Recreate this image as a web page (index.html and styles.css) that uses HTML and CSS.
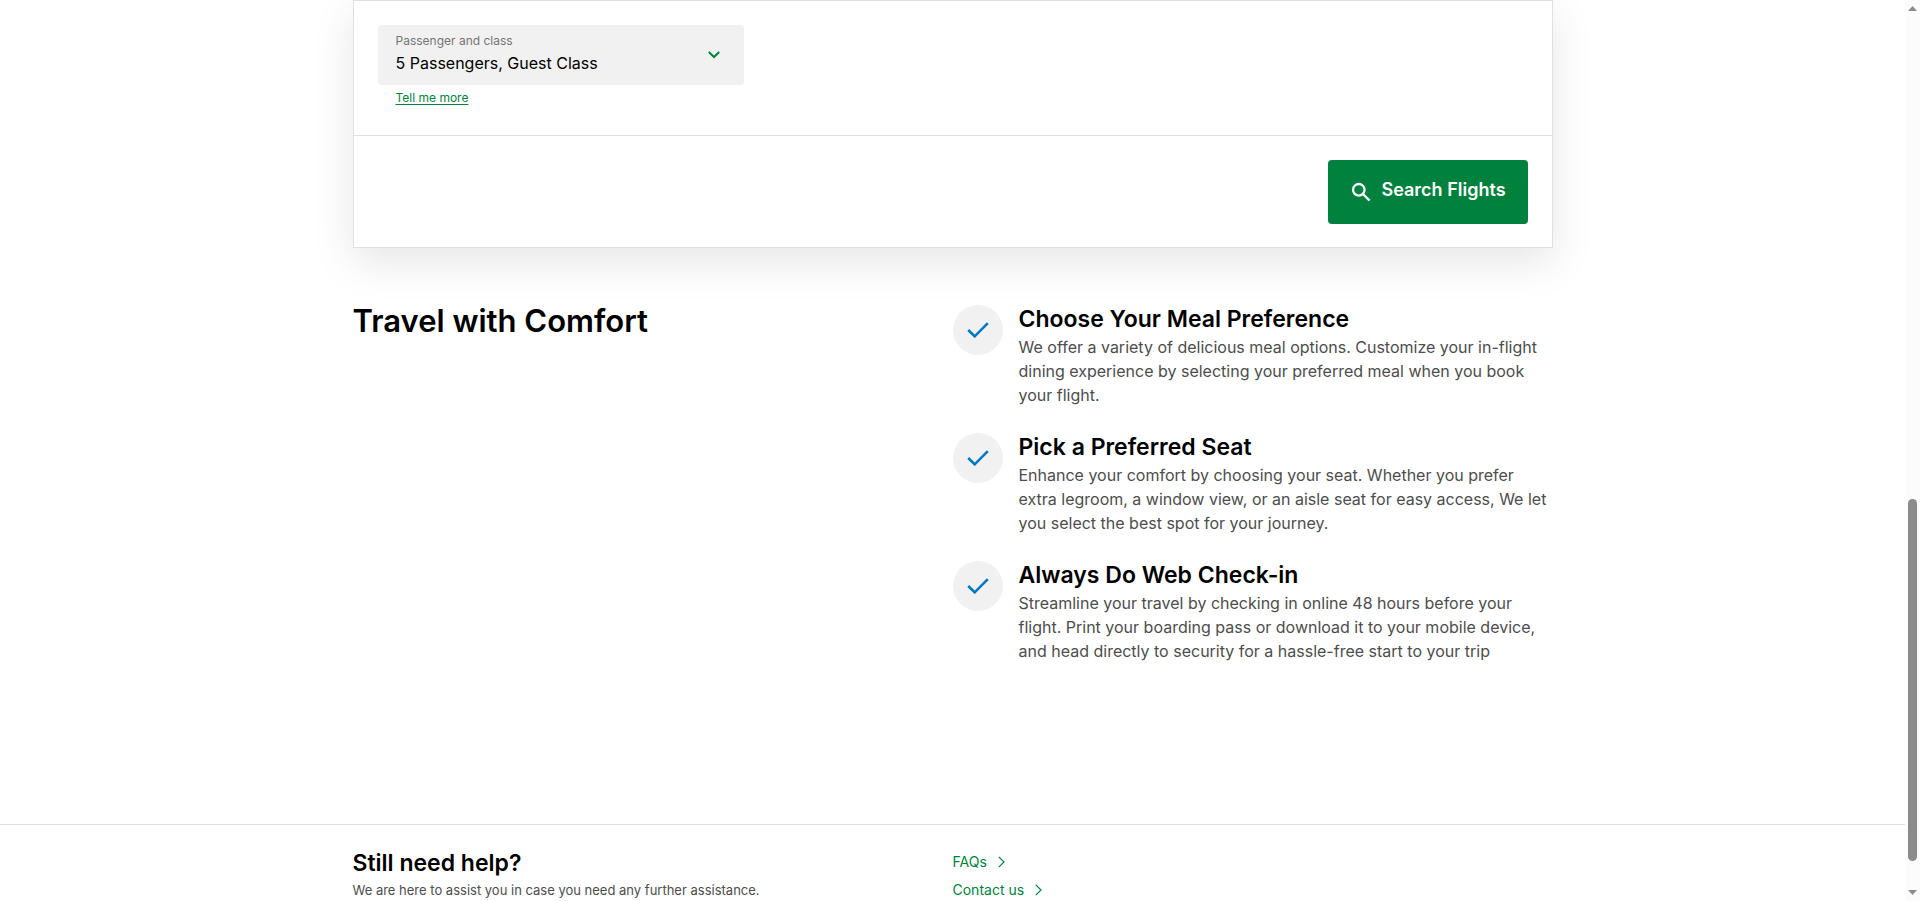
FILE: index.html
```
<!DOCTYPE html>
<html lang="en">
<head>
<meta charset="utf-8">
<meta name="viewport" content="width=device-width, initial-scale=1">
<title>Travel with Comfort</title>
<link rel="stylesheet" href="styles.css">
</head>
<body>
<div class="window">
  <div class="page">
    <main class="container">
      <form class="booking">
        <div class="booking-row">
          <button type="button" class="field" aria-haspopup="dialog">
            <span class="field-text">
              <span class="field-label">Passenger and class</span>
              <span class="field-value">5 Passengers, Guest Class</span>
            </span>
            <svg class="field-icon" viewBox="0 0 12 8" aria-hidden="true"><path d="M.8 1 6 6l5.2-5"/></svg>
          </button>
          <a class="more" href="#more">Tell me more</a>
        </div>
        <div class="booking-actions">
          <button type="submit" class="search">
            <svg class="search-icon" viewBox="0 0 20 20" aria-hidden="true"><circle cx="7.8" cy="7.8" r="5.8"/><path d="m12 12 6.6 6.6"/></svg>
            <span>Search Flights</span>
          </button>
        </div>
      </form>
      <section class="comfort columns">
        <h2 class="comfort-title">Travel with Comfort</h2>
        <ul class="tips">
          <li class="tip">
            <span class="tip-badge"><svg class="tip-icon" viewBox="0 0 22 16" aria-hidden="true"><path d="m1.2 8 6.5 6.3L20.8 1.2"/></svg></span>
            <div class="tip-body">
              <h3 class="subtitle">Choose Your Meal Preference</h3>
              <p class="tip-text">We offer a variety of delicious meal options. Customize your in-flight dining experience by selecting your preferred meal when you book your flight.</p>
            </div>
          </li>
          <li class="tip">
            <span class="tip-badge"><svg class="tip-icon" viewBox="0 0 22 16" aria-hidden="true"><path d="m1.2 8 6.5 6.3L20.8 1.2"/></svg></span>
            <div class="tip-body">
              <h3 class="subtitle">Pick a Preferred Seat</h3>
              <p class="tip-text">Enhance your comfort by choosing your seat. Whether you prefer extra legroom, a window view, or an aisle seat for easy access, We let you select the best spot for your journey.</p>
            </div>
          </li>
          <li class="tip">
            <span class="tip-badge"><svg class="tip-icon" viewBox="0 0 22 16" aria-hidden="true"><path d="m1.2 8 6.5 6.3L20.8 1.2"/></svg></span>
            <div class="tip-body">
              <h3 class="subtitle">Always Do Web Check-in</h3>
              <p class="tip-text">Streamline your travel by checking in online 48 hours before your flight. Print your boarding pass or download it to your mobile device, and head directly to security for a hassle-free start to your trip</p>
            </div>
          </li>
        </ul>
      </section>
    </main>
    <footer class="help">
      <div class="container columns">
        <div>
          <h3 class="subtitle">Still need help?</h3>
          <p class="help-text">We are here to assist you in case you need any further assistance.</p>
        </div>
        <nav class="links" aria-label="Help">
          <a class="link" href="#faqs">FAQs <svg class="link-icon" viewBox="0 0 7 12" aria-hidden="true"><path d="m.8.8 5.2 5.2L.8 11.2"/></svg></a>
          <a class="link" href="#contact">Contact us <svg class="link-icon" viewBox="0 0 7 12" aria-hidden="true"><path d="m.8.8 5.2 5.2L.8 11.2"/></svg></a>
        </nav>
      </div>
    </footer>
  </div>
  <div class="scrollbar" aria-hidden="true">
    <svg class="arrow" viewBox="0 0 9 5"><path d="M0 5h9L4.5 0z"/></svg>
    <div class="track"><div class="thumb"></div></div>
    <svg class="arrow" viewBox="0 0 9 5"><path d="M0 0h9L4.5 5z"/></svg>
  </div>
</div>
</body>
</html>
```
FILE: styles.css
```
* { box-sizing: border-box; }

body {
  margin: 0;
  background: #fff;
  color: #000;
  font-family: Inter, "Liberation Sans", sans-serif;
  font-size: 16px;
  line-height: 24px;
}

h2, h3, p, ul { margin: 0; padding: 0; }
ul { list-style: none; }
svg { display: block; flex: none; }

.window {
  display: flex;
  height: 100vh;
  overflow: hidden;
}

.page { flex: 1; min-width: 0; }

.container {
  max-width: 1200px;
  margin: 0 auto;
}

.columns {
  display: grid;
  grid-template-columns: 1fr 1fr;
}

.booking {
  border: 1px solid #e1e1e1;
  box-shadow: 0 14px 40px rgba(0, 0, 0, .1);
}

.booking-row {
  display: flex;
  flex-direction: column;
  align-items: flex-start;
  gap: 4px;
  padding: 24px 24px 28px;
  border-bottom: 1px solid #e1e1e1;
}

.field {
  display: flex;
  align-items: center;
  justify-content: space-between;
  width: 366px;
  max-width: 100%;
  height: 60px;
  padding: 0 24px 0 18px;
  border: 0;
  border-radius: 4px;
  background: #f1f1f1;
  font: inherit;
  text-align: left;
}

.field-text { display: flex; flex-direction: column; padding-bottom: 4px; }
.field-label { color: #757575; font-size: 12px; line-height: 20px; }
.field-value { color: #000; font-size: 16px; line-height: 24px; }

.field-icon {
  width: 12px;
  height: 8px;
  fill: none;
  stroke: #00843d;
  stroke-width: 2;
}

.more {
  margin-left: 18px;
  color: #00843d;
  font-size: 12px;
  line-height: 18px;
  text-underline-offset: 2px;
}

.booking-actions {
  display: flex;
  justify-content: flex-end;
  padding: 24px 24px 23px;
}

.search {
  display: flex;
  align-items: center;
  justify-content: center;
  gap: 10px;
  width: 200px;
  height: 64px;
  padding: 0 0 4px 2px;
  border: 0;
  border-radius: 4px;
  background: #00813e;
  color: #fff;
  font: inherit;
  font-size: 18px;
  font-weight: 600;
}

.search-icon {
  width: 20px;
  height: 20px;
  margin-top: 4px;
  fill: none;
  stroke: #fff;
  stroke-width: 2.3;
}

.comfort { padding: 56px 0 161px; }

.comfort-title {
  font-size: 31px;
  font-weight: 600;
  line-height: 34px;
}

.tips {
  display: flex;
  flex-direction: column;
  gap: 25px;
}

.tip { display: flex; gap: 16px; }
.tip-body { flex: 1; min-width: 0; }

.tip-badge {
  display: flex;
  flex: none;
  align-items: center;
  justify-content: center;
  width: 50px;
  height: 50px;
  margin-top: 1px;
  border-radius: 50%;
  background: #f1f1f1;
}

.tip-icon {
  width: 22px;
  height: 16px;
  fill: none;
  stroke: #0078be;
  stroke-width: 2.6;
}

.subtitle {
  margin-bottom: 1px;
  font-size: 23px;
  font-weight: 600;
  line-height: 30px;
}

.tip-text { color: #4d4d4d; }

.help {
  padding: 23px 0;
  border-top: 1px solid #e1e1e1;
}

.help-text { color: #4d4d4d; font-size: 13px; line-height: 22px; }

.links {
  display: flex;
  flex-direction: column;
  align-items: flex-start;
  gap: 8px;
  padding-top: 4px;
}

.link {
  display: flex;
  align-items: center;
  gap: 11px;
  color: #00843d;
  font-size: 14px;
  line-height: 20px;
  text-decoration: none;
}

.link-icon {
  width: 7px;
  height: 12px;
  fill: none;
  stroke: #00843d;
  stroke-width: 1.2;
}

.scrollbar {
  display: flex;
  flex: none;
  flex-direction: column;
  align-items: center;
  gap: 7px;
  width: 15px;
  padding: 6px 0;
  background: #fcfcfc;
}

.arrow { width: 9px; height: 5px; fill: #8b8b8b; }

.track {
  display: flex;
  flex: 1;
  flex-direction: column;
  justify-content: flex-end;
  padding-bottom: 22px;
}

.thumb {
  width: 9px;
  height: 43%;
  border-radius: 5px;
  background: #8b8b8b;
}
```
